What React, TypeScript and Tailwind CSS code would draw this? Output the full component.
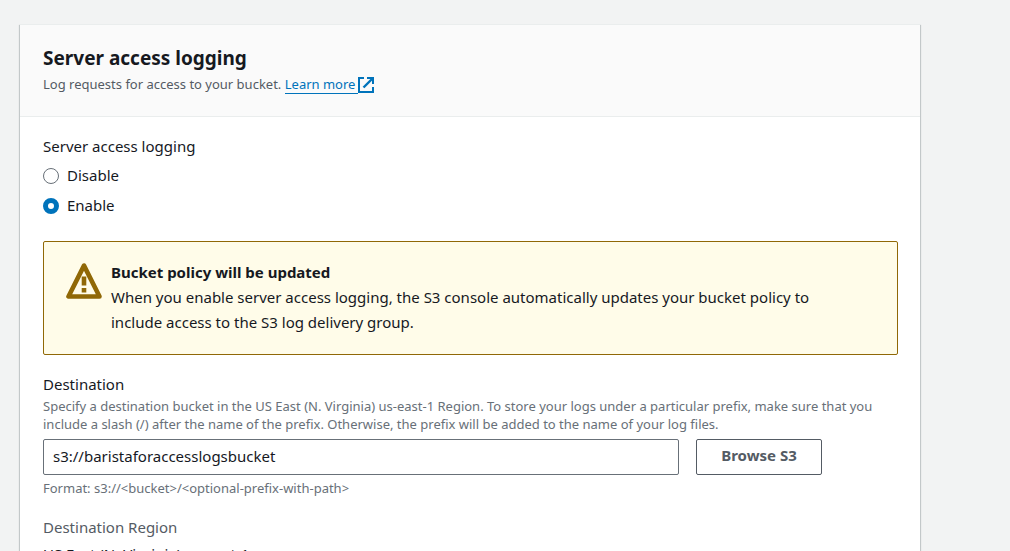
import { useState } from "react";

function ExternalIcon() {
  return (
    <svg viewBox="0 0 16 16" className="inline-block size-4 align-[-4px]" fill="none" stroke="currentColor" strokeWidth="2" aria-hidden="true">
      <path d="M6 1H1v14h14v-5" />
      <path d="M9 1h6v6" />
      <path d="M14.5 1.5L5.5 10.5" strokeWidth="2.4" />
    </svg>
  );
}

function WarningIcon() {
  return (
    <svg viewBox="0 0 36 36" className="mt-[3px] size-9 shrink-0 text-[#906806]" fill="none" stroke="currentColor" strokeWidth="4.6" strokeLinejoin="round" aria-hidden="true">
      <path d="M18 2.6L2.5 33.5H33.5Z" />
      <path d="M18 13.5v9M18 25v4.4" />
    </svg>
  );
}

type OptionProps = { label: string; value: string; current: string; onSelect: (value: string) => void };

function RadioOption({ label, value, current, onSelect }: OptionProps) {
  return (
    <label className="flex items-center gap-2 leading-[22px]">
      <input
        type="radio"
        name="logging"
        value={value}
        checked={current === value}
        onChange={() => onSelect(value)}
        className="mt-px size-4 appearance-none rounded-full border border-[#687078] bg-white checked:border-5 checked:border-[#0073bb]"
      />
      {label}
    </label>
  );
}

export default function App() {
  const [logging, setLogging] = useState("enable");
  const [destination, setDestination] = useState("s3://baristaforaccesslogsbucket");

  return (
    <main className="h-screen overflow-hidden bg-[#f2f3f3] pt-6 pr-[90px] pl-5 font-['Noto_Sans',sans-serif] text-[15px] text-[#16191f]">
      <section className="min-h-screen border-t border-[#eaeded] bg-white shadow-[0_1px_1px_0_rgba(0,28,36,0.3),1px_1px_1px_0_rgba(0,28,36,0.15),-1px_1px_1px_0_rgba(0,28,36,0.15)]">
        <header className="border-b border-[#eaeded] bg-[#fafafa] px-[23px] pt-[19px] pb-[21px]">
          <h2 className="text-[19px] leading-7 font-bold">Server access logging</h2>
          <p className="mt-0.5 text-[13px] leading-[21px] text-[#545b64]">
            Log requests for access to your bucket.{" "}
            <a href="#learn-more" className="text-[#0073bb]">
              <span className="border-b border-[#0073bb] pr-[3px]">Learn more</span>
              <ExternalIcon />
            </a>
          </p>
        </header>

        <div className="pt-[18px] pr-[22px] pl-[23px]">
          <fieldset>
            <legend className="leading-[22px]">Server access logging</legend>
            <div className="mt-[7px] flex flex-col gap-2">
              <RadioOption label="Disable" value="disable" current={logging} onSelect={setLogging} />
              <RadioOption label="Enable" value="enable" current={logging} onSelect={setLogging} />
            </div>
          </fieldset>

          <div role="status" className="mt-[25px] flex gap-[9px] rounded-xs border border-[#906806] bg-[#fffce9] px-[22px] py-[18px] leading-[25px]">
            <WarningIcon />
            <div className="pr-10">
              <h3 className="font-bold">Bucket policy will be updated</h3>
              <p className="pb-px">
                When you enable server access logging, the S3 console automatically updates your bucket policy to include access to the S3 log delivery group.
              </p>
            </div>
          </div>

          <label htmlFor="destination" className="mt-[18px] block leading-[22px]">Destination</label>
          <p id="destination-help" className="mt-0.5 text-[13px] leading-[18px] text-[#687078]">
            Specify a destination bucket in the US East (N. Virginia) us-east-1 Region. To store your logs under a particular prefix, make sure that you include a slash (/) after the name of the prefix. Otherwise, the prefix will be added to the name of your log files.
          </p>
          <div className="mt-1.5 flex gap-[17px] pr-[76px]">
            <input
              id="destination"
              type="text"
              aria-describedby="destination-help destination-format"
              value={destination}
              onChange={(event) => setDestination(event.target.value)}
              className="h-9 min-w-0 flex-1 rounded-xs border border-[#687078] bg-white px-[9px] pb-0.5"
            />
            <button type="button" className="h-9 w-[126px] rounded-xs border border-[#545b64] bg-white pb-1 font-bold text-[#545b64]">
              Browse S3
            </button>
          </div>
          <p id="destination-format" className="mt-1 text-[13px] leading-[18px] text-[#687078]">
            Format: s3://&lt;bucket&gt;/&lt;optional-prefix-with-path&gt;
          </p>

          <dl className="mt-[19px] leading-[22px]">
            <dt className="text-[#545b64]">Destination Region</dt>
            <dd className="mt-[5px]">US East (N. Virginia) us-east-1</dd>
          </dl>
        </div>
      </section>
    </main>
  );
}
